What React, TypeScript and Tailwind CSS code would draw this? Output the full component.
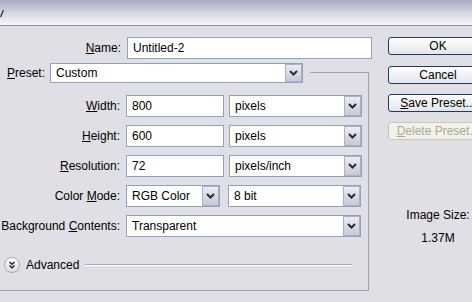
import React from "react";

const Chevron = () => (
  <svg width="9" height="6" viewBox="0 0 9 6">
    <polyline points="1,1 4.5,4.5 8,1" fill="none" stroke="#2b2b33" strokeWidth="2" />
  </svg>
);

const DropBtn = () => (
  <div className="h-full w-[17px] shrink-0 border border-[#a9b2c6] bg-gradient-to-b from-[#ececf2] to-[#c9c9d6] flex items-center justify-center">
    <Chevron />
  </div>
);

const Input = ({ value, w }: { value: string; w: string }) => (
  <div className={`${w} h-[22px] border border-[#8fa3bb] bg-white pl-[5px] flex items-center shrink-0`}>
    {value}
  </div>
);

const Select = ({ value, w, h = "h-[22px]" }: { value: string; w: string; h?: string }) => (
  <div className={`${w} ${h} border border-[#8fa3bb] bg-white flex items-stretch shrink-0`}>
    <div className="flex-1 pl-[5px] flex items-center">{value}</div>
    <DropBtn />
  </div>
);

const Label = ({ children, w = "w-[130px]" }: { children: React.ReactNode; w?: string }) => (
  <div className={`${w} text-right whitespace-nowrap shrink-0`}>{children}</div>
);

const Btn = ({ children, disabled = false, mt = "" }: { children: React.ReactNode; disabled?: boolean; mt?: string }) => (
  <div
    className={`${mt} w-[100px] h-[18px] rounded-[3px] border flex items-center justify-center whitespace-nowrap ${
      disabled
        ? "border-[#c9c7ba] bg-[#f2f1ea] text-[#aca899]"
        : "border-[#1c3a6e] bg-gradient-to-b from-[#ffffff] to-[#e4e4ec] text-black"
    }`}
  >
    {children}
  </div>
);

export default function App() {
  return (
    <div className="w-[472px] h-[302px] overflow-hidden bg-[#dfdfe5] text-[12px] leading-[14px] text-black font-['Liberation_Sans',Arial,sans-serif]">
      <div className="h-[26px] border-b border-[#8c8ca4] bg-gradient-to-b from-[#a8a8c0] via-[#d6d6e2] to-[#f6f6fa] flex items-center">
        <svg width="4" height="8" viewBox="0 0 4 8" className="mt-[2px]">
          <line x1="3.5" y1="0" x2="0.5" y2="7" stroke="#222" strokeWidth="1.2" />
        </svg>
      </div>
      <div className="flex">
        <div className="w-[372px] shrink-0 pt-[11px]">
          <div className="flex items-center">
            <Label w="w-[121px]">
              <u>N</u>ame:
            </Label>
            <div className="ml-[6px]">
              <Input value="Untitled-2" w="w-[245px]" />
            </div>
          </div>
          <div className="-ml-[10px] w-[379px] mt-[13px] border-t border-r border-b border-[#a3a3ab] pb-[17px]">
            <div className="-mt-[10px] flex items-center w-fit bg-[#dfdfe5] pl-[17px] pr-[7px]">
              <div className="whitespace-nowrap">
                <u>P</u>reset:
              </div>
              <div className="ml-[5px]">
                <Select value="Custom" w="w-[253px]" h="h-[20px]" />
              </div>
            </div>
            <div className="mt-[12px] flex flex-col gap-[8px]">
              <div className="flex items-center">
                <Label>
                  <u>W</u>idth:
                </Label>
                <div className="ml-[6px] flex">
                  <Input value="800" w="w-[98px]" />
                  <div className="ml-[5px]">
                    <Select value="pixels" w="w-[133px]" />
                  </div>
                </div>
              </div>
              <div className="flex items-center">
                <Label>
                  <u>H</u>eight:
                </Label>
                <div className="ml-[6px] flex">
                  <Input value="600" w="w-[98px]" />
                  <div className="ml-[5px]">
                    <Select value="pixels" w="w-[133px]" />
                  </div>
                </div>
              </div>
              <div className="flex items-center">
                <Label>
                  <u>R</u>esolution:
                </Label>
                <div className="ml-[6px] flex">
                  <Input value="72" w="w-[98px]" />
                  <div className="ml-[5px]">
                    <Select value="pixels/inch" w="w-[133px]" />
                  </div>
                </div>
              </div>
              <div className="flex items-center">
                <Label>
                  Color <u>M</u>ode:
                </Label>
                <div className="ml-[6px] flex">
                  <Select value="RGB Color" w="w-[94px]" />
                  <div className="ml-[8px]">
                    <Select value="8 bit" w="w-[133px]" />
                  </div>
                </div>
              </div>
              <div className="flex items-center">
                <Label>
                  Background <u>C</u>ontents:
                </Label>
                <div className="ml-[6px] flex">
                  <Select value="Transparent" w="w-[235px]" />
                </div>
              </div>
            </div>
            <div className="mt-[20px] flex items-center pl-[14px] pr-[16px] h-[16px]">
              <svg width="16" height="16" viewBox="0 0 16 16" className="shrink-0">
                <defs>
                  <linearGradient id="adv" x1="0" y1="0" x2="0" y2="1">
                    <stop offset="0" stopColor="#ffffff" />
                    <stop offset="1" stopColor="#d8d8e0" />
                  </linearGradient>
                </defs>
                <circle cx="8" cy="8" r="7.5" fill="url(#adv)" stroke="#a8a8b4" />
                <polyline points="5.5,5 8,7.3 10.5,5" fill="none" stroke="#222" strokeWidth="1.4" />
                <polyline points="5.5,8.5 8,10.8 10.5,8.5" fill="none" stroke="#222" strokeWidth="1.4" />
              </svg>
              <div className="ml-[6px] whitespace-nowrap">Advanced</div>
              <div className="ml-[6px] flex-1 h-0 border-t border-[#a8a8b0] border-b-white border-b" />
            </div>
          </div>
        </div>
        <div className="ml-[16px] pt-[11px] flex flex-col shrink-0">
          <Btn>OK</Btn>
          <Btn mt="mt-[11px]">Cancel</Btn>
          <Btn mt="mt-[10px]">
            <span>
              <u>S</u>ave Preset...
            </span>
          </Btn>
          <Btn mt="mt-[10px]" disabled>
            <span>
              <u>D</u>elete Preset...
            </span>
          </Btn>
          <div className="mt-[68px] w-[100px] text-center">Image Size:</div>
          <div className="mt-[9px] w-[100px] text-center">1.37M</div>
        </div>
      </div>
    </div>
  );
}
